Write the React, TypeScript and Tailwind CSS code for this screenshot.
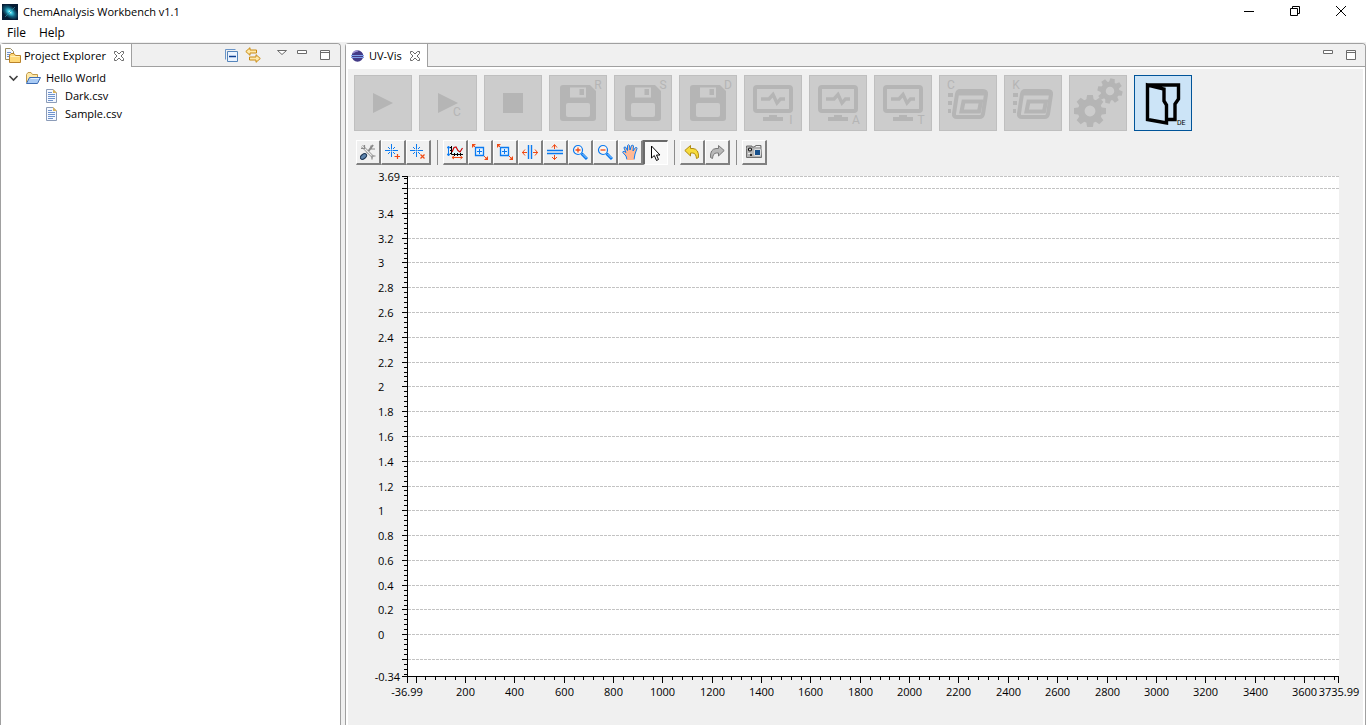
import React, { useEffect, useRef, useState } from "react";

type Kids = { children?: React.ReactNode };

/* ---------- small helpers ---------- */

function Icon({ children, className = "h-4 w-4" }: Kids & { className?: string }) {
  return (
    <svg viewBox="0 0 16 16" className={className} fill="none" aria-hidden="true">
      {children}
    </svg>
  );
}

function ToolButton({ label, pressed = false, children }: Kids & { label: string; pressed?: boolean }) {
  return (
    <button
      type="button"
      aria-label={label}
      aria-pressed={pressed}
      className={
        pressed
          ? "flex h-[25px] w-[25px] items-center justify-center border-t-2 border-l-2 border-r border-b border-t-[#696969] border-l-[#696969] border-r-white border-b-white bg-[#f8f8f8]"
          : "flex h-[25px] w-[25px] items-center justify-center border-t border-l border-r-2 border-b-2 border-t-white border-l-white border-r-[#808080] border-b-[#808080] bg-[#f0f0f0]"
      }
    >
      <Icon>{children}</Icon>
    </button>
  );
}

function Separator() {
  return <div className="mr-[5px] ml-1.5 h-[25px] w-px bg-[#8c8c8c]" />;
}

function ActionButton({ label, active = false, children }: Kids & { label: string; active?: boolean }) {
  return (
    <button
      type="button"
      aria-label={label}
      disabled={!active}
      className={
        active
          ? "h-14 w-[58px] border border-[#005499] bg-[#cce4f7]"
          : "h-14 w-[58px] border border-[#bfbfbf] bg-[#cccccc]"
      }
    >
      <svg viewBox="1 1 56 54" className="h-full w-full" fill="#b5b5b5" fontFamily="Roboto, sans-serif" aria-hidden="true">
        {children}
      </svg>
    </button>
  );
}

function Mark({ x, y, children }: Kids & { x: number; y: number }) {
  return (
    <text x={x} y={y} fontSize="12" textAnchor="middle">
      {children}
    </text>
  );
}

function Floppy() {
  return (
    <>
      <path d="M14 10H41L47 16V43Q47 46 44 46H14Q11 46 11 43V13Q11 10 14 10Z" />
      <path d="M21 12.500H37V22.500H21Z" fill="#ccc" />
      <path d="M30.500 14H35V20H30.500Z" />
      <rect x="17" y="28" width="24" height="14" rx="2" fill="#ccc" />
    </>
  );
}

function Monitor() {
  return (
    <>
      <rect x="11" y="12" width="36" height="24" rx="2" fill="none" stroke="#b5b5b5" strokeWidth="4" />
      <path d="M17 24H25L29 19.500L33 28L36.500 24H41" fill="none" stroke="#b5b5b5" strokeWidth="3.400" />
      <path d="M25 40H33V42H39V46H19V42H25Z" />
    </>
  );
}

function ListWindow() {
  return (
    <>
      <path d="M9 18H14V22H9ZM9 26H13V30H9ZM9 34H12V38H9Z" />
      <path d="M21 16H44Q47.500 16 47 19.500L44 39Q43.500 42 40.500 42H18Q14.500 42 15 38.500L18 19Q18.500 16 21 16Z" fill="none" stroke="#b5b5b5" strokeWidth="4" />
      <path d="M20 15H47L46 20.500H18.500Z" />
      <path d="M24.500 26.500H42L40 36.500H22.500Z" fill="none" stroke="#b5b5b5" strokeWidth="4" />
    </>
  );
}

function Gear({ cx, cy, r, start }: { cx: number; cy: number; r: number; start: number }) {
  const teeth = Array.from({ length: 8 }, (_, i) => start + i * 45);
  const body = r * 0.76;
  return (
    <>
      <circle cx={cx} cy={cy} r={(body + r * 0.34) / 2} fill="none" stroke="#b5b5b5" strokeWidth={body - r * 0.34} />
      {teeth.map((a) => (
        <path
          key={a}
          transform={`rotate(${a} ${cx} ${cy})`}
          d={`M${cx - r * 0.24} ${cy - r * 0.65}L${cx - r * 0.18} ${cy - r}H${cx + r * 0.18}L${cx + r * 0.24} ${cy - r * 0.65}Z`}
        />
      ))}
    </>
  );
}

/* ---------- view chrome ---------- */

function CloseGlyph() {
  return (
    <svg viewBox="0 0 12 12" className="h-3 w-3" fill="#fff" stroke="#6b6b6b" aria-hidden="true">
      <path d="M1.500 1.500H3.500L6 4L8.500 1.500H10.500V3.500L8 6L10.500 8.500V10.500H8.500L6 8L3.500 10.500H1.500V8.500L4 6L1.500 3.500Z" />
    </svg>
  );
}

function MinMax() {
  return (
    <div className="flex gap-[11px]">
      <button type="button" aria-label="Minimize view" className="h-3 w-3">
        <svg viewBox="0 0 12 12" fill="#fff" stroke="#6b6b6b" aria-hidden="true">
          <path d="M1.500 1.500H10.500V4.500H1.500Z" />
        </svg>
      </button>
      <button type="button" aria-label="Maximize view" className="h-3 w-3">
        <svg viewBox="0 0 12 12" fill="#fff" stroke="#6b6b6b" aria-hidden="true">
          <path d="M1.500 1.500H10.500V10.500H1.500ZM1.500 3.500H10.500" />
        </svg>
      </button>
    </div>
  );
}

function Tab({ title, icon }: { title: string; icon: React.ReactNode }) {
  return (
    <div className="flex h-full items-center border-r border-[#a0a0a0] bg-white pr-1.5 pl-1">
      {icon}
      <span className="pr-[7px] pl-[3px]">{title}</span>
      <button type="button" aria-label={`Close ${title}`}>
        <CloseGlyph />
      </button>
    </div>
  );
}

function FileIcon() {
  return (
    <Icon>
      <path d="M2.500 1.500H9L12.500 5V14.500H2.500Z" fill="#f4f8ff" stroke="#8c9cb8" />
      <path d="M9 1L13 5H9Z" fill="#d8b25c" />
      <path d="M4 4.500H8M4 6.500H11M4 8.500H11M4 10.500H11M4 12.500H9" stroke="#6f93cc" />
    </Icon>
  );
}

/* ---------- project explorer ---------- */

function ProjectExplorer() {
  return (
    <section className="flex w-[341px] shrink-0 flex-col rounded-t border border-b-0 border-[#a0a0a0] bg-white">
      <header className="flex h-[23px] shrink-0 rounded-t bg-[#f0f0f0]">
        <Tab
          title="Project Explorer"
          icon={
            <Icon>
              <path d="M.5 .5H5.500L8.500 3.500V11.500H.5Z" fill="#f4f8ff" stroke="#9a8c5c" />
              <path d="M2 4.500H6M2 6.500H6M2 8.500H5" stroke="#6f93cc" />
              <path d="M4.500 14.500V7L6 5.500H9L10.500 7.500H15.500V14.500Z" fill="#ffd978" stroke="#b9822a" />
              <path d="M5.500 8.500H14.500" stroke="#fff0b8" />
            </Icon>
          }
        />
        <div className="flex flex-1 items-center justify-end gap-2 border-b border-[#a0a0a0] pr-[9px]">
          <div className="flex items-center gap-1.5 pr-[7px]">
            <button type="button" aria-label="Collapse all">
              <Icon>
                <path d="M2.500 12.500V2.500H12.500" stroke="#6a95c8" />
                <path d="M4.500 4.500H14.500V14.500H4.500Z" fill="#eaf3ff" stroke="#5585bb" />
                <path d="M6 9.500H13" stroke="#0b3d91" strokeWidth="1.500" />
              </Icon>
            </button>
            <button type="button" aria-label="Link with editor">
              <Icon>
                <path d="M.8 4.500L5 .7V3H11.500V6H5V8.300Z" fill="#ffe9a8" stroke="#c98a12" />
                <path d="M15.300 11.500L11 7.700V10H4.500V13H11V15.300Z" fill="#ffe9a8" stroke="#c98a12" />
              </Icon>
            </button>
          </div>
          <button type="button" aria-label="View menu" className="h-3 w-3">
            <svg viewBox="0 0 12 12" fill="#fff" stroke="#6b6b6b" aria-hidden="true">
              <path d="M1.500 1.500H10.500L6 5.500Z" />
            </svg>
          </button>
          <MinMax />
        </div>
      </header>
      <ul className="flex flex-col pt-0.5">
        <li>
          <div className="flex h-[18px] items-center pl-1">
            <Icon>
              <path d="M4.500 6L8.500 10L12.500 6" stroke="#404040" strokeWidth="1.600" />
            </Icon>
            <span className="pl-1">
              <Icon>
                <path d="M1.500 12.500V4.500L3 2.500H6L7.500 4.500H12.500V7" fill="#ffe9a8" stroke="#c19a4b" />
                <path d="M1.500 13.500L4.500 7.500H15.500L12.500 13.500Z" fill="#a9cbf5" stroke="#3c6cb4" />
                <path d="M5.500 8.500H14" stroke="#e5f1ff" />
              </Icon>
            </span>
            <span className="pl-[5px]">Hello World</span>
          </div>
          <ul>
            {["Dark.csv", "Sample.csv"].map((name) => (
              <li key={name} className="flex h-[18px] items-center gap-[5px] pl-[43px]">
                <FileIcon />
                <span>{name}</span>
              </li>
            ))}
          </ul>
        </li>
      </ul>
    </section>
  );
}

/* ---------- chart ---------- */

const X_MIN = -36.99;
const X_MAX = 3735.99;
const Y_MIN = -0.337;
const Y_MAX = 3.698;
const PAD = { left: 59, right: 25, top: 7, bottom: 49 };

function range(from: number, to: number) {
  return Array.from({ length: to - from + 1 }, (_, i) => from + i);
}

function Chart() {
  const box = useRef<HTMLDivElement>(null);
  const [size, setSize] = useState({ w: 0, h: 0 });

  useEffect(() => {
    const el = box.current;
    if (!el) return;
    const measure = () => setSize({ w: el.clientWidth, h: el.clientHeight });
    measure();
    const observer = new ResizeObserver(measure);
    observer.observe(el);
    return () => observer.disconnect();
  }, []);

  const left = PAD.left;
  const right = size.w - PAD.right;
  const top = PAD.top;
  const bottom = size.h - PAD.bottom;
  const px = (v: number) => Math.floor(left + ((v - X_MIN) / (X_MAX - X_MIN)) * (right - left)) + 0.5;
  const py = (v: number) => Math.round(bottom - ((v - Y_MIN) / (Y_MAX - Y_MIN)) * (bottom - top)) + 0.5;
  const xTicks = range(0, 93).map((i) => i * 40);
  const yTicks = range(-8, 92).map((i) => i / 25);

  return (
    <div ref={box} className="min-h-0 flex-1 overflow-hidden">
      {size.w > 0 && (
        <svg width={size.w} height={size.h} role="img" aria-label="Spectrum chart" className="block">
          <rect x={left} y={top} width={right - left + 1} height={bottom - top} fill="#fff" />
          {[Y_MAX, ...range(-1, 18).map((i) => i / 5)].map((v) => (
            <path key={v} d={`M${left + 1} ${py(v)}H${right + 1}`} stroke="#c3c3c3" strokeDasharray="3 1" />
          ))}
          <path d={`M${left + 0.5} ${top}V${bottom + 0.5}H${right + 1}`} fill="none" stroke="#000" />
          {xTicks.map((v, i) => (
            <path key={v} d={`M${px(v)} ${bottom}v${i % 5 === 0 ? 7 : 4}`} stroke="#000" />
          ))}
          {yTicks.map((v, i) => (
            <path key={v} d={`M${left + 1} ${py(v)}h${(i - 8) % 5 === 0 ? -6 : -4}`} stroke="#000" />
          ))}
          <path
            d={`M${left + 0.5} ${bottom}v7M${right + 0.5} ${bottom}v7M${left} ${top + 0.5}h-5M${left} ${bottom + 0.5}h-5`}
            stroke="#000"
          />
          <g textAnchor="end">
            <text x={left - 7} y={top + 5}>3.69</text>
            <text x={left - 7} y={bottom + 5}>-0.34</text>
          </g>
          {range(0, 17).map((i) => (
            <text key={i} x={left - 29} y={py(i / 5) + 4}>
              {i / 5}
            </text>
          ))}
          <g textAnchor="middle">
            {range(1, 18).map((i) => (
              <text key={i} x={px(i * 200)} y={bottom + 20}>
                {i * 200}
              </text>
            ))}
            <text x={left} y={bottom + 20}>-36.99</text>
            <text x={right + 1} y={bottom + 20}>3735.99</text>
          </g>
        </svg>
      )}
    </div>
  );
}

/* ---------- UV-Vis view ---------- */

const RED = "#f04a14";
const BLUE = "#0a7af0";

function Crosshair() {
  return (
    <path d="M6.500 0V5M6.500 8V13M0 6.500H5M8 6.500H13M6 6H7V7H6ZM3 3L5 5M8 8L10 10M10 3L8 5M5 8L3 10" stroke={BLUE} />
  );
}

function ZoomBox() {
  return (
    <>
      <path d="M3.500 3.500H11.500V11.500H3.500Z" fill="#e6f2ff" stroke={BLUE} strokeWidth="1.300" />
      <path d="M5 7.500H10M7.500 5V10" stroke={BLUE} />
      <path d="M0 0H4L0 4ZM16 16V12L12 16Z" fill={RED} />
      <path d="M1 1L3 3M12 12L15 15" stroke={RED} />
    </>
  );
}

function Magnifier({ plus = false }: { plus?: boolean }) {
  return (
    <>
      <circle cx="6" cy="6" r="4.500" fill="#fff4ec" stroke={BLUE} strokeWidth="1.200" />
      <path d="M9.500 9.500L15 15" stroke={BLUE} strokeWidth="3" />
      <path d="M10.500 10L14.500 14" stroke="#9fd0ff" />
      <path d={plus ? "M3.500 6H8.500M6 3.500V8.500" : "M3.500 6H8.500"} stroke={RED} strokeWidth="1.300" />
    </>
  );
}

function ActionBar() {
  return (
    <div className="flex flex-wrap gap-[7px] px-1.5 pt-1.5">
      <ActionButton label="Run">
        <path d="M19 18L39 28L19 38Z" />
      </ActionButton>
      <ActionButton label="Run continuously">
        <path d="M19 18L39 28L19 38Z" />
        <Mark x={38} y={41}>C</Mark>
      </ActionButton>
      <ActionButton label="Stop">
        <path d="M19 18H39V38H19Z" />
      </ActionButton>
      {["R", "S", "D"].map((c) => (
        <ActionButton key={c} label={`Save ${c}`}>
          <Floppy />
          <Mark x={49} y={14}>{c}</Mark>
        </ActionButton>
      ))}
      {["I", "A", "T"].map((c) => (
        <ActionButton key={c} label={`Show ${c}`}>
          <Monitor />
          <Mark x={47} y={49}>{c}</Mark>
        </ActionButton>
      ))}
      {["C", "K"].map((c) => (
        <ActionButton key={c} label={`List ${c}`}>
          <ListWindow />
          <Mark x={12} y={14}>{c}</Mark>
        </ActionButton>
      ))}
      <ActionButton label="Settings">
        <Gear cx={21} cy={36} r={16} start={0} />
        <Gear cx={41} cy={16} r={12.5} start={12} />
      </ActionButton>
      <ActionButton label="Exit" active>
        <path
          d="M13.500 10L30 14V26L32.500 30V48L13.500 44.500ZM13.500 10H44.500V24L41 29V44.500H32.500"
          fill="none"
          stroke="#000"
          strokeWidth="3.400"
        />
        <text x="43" y="50" fontSize="7" fill="#000">DE</text>
      </ActionButton>
    </div>
  );
}

function ChartToolbar() {
  return (
    <div className="flex flex-wrap items-center pt-[9px] pl-2">
      <ToolButton label="Configure">
        <path d="M13 1L7 9" stroke="#8a8a8a" strokeWidth="2" />
        <path d="M2 2L13 13" stroke="#8a8a8a" strokeWidth="2.500" />
        <path d="M2 2L13 13" stroke="#eee" strokeWidth="1.200" />
        <path d="M1 4.500L4.500 4.500V1M12 15.500V12H15.500M11 1.500V5H15" stroke="#8a8a8a" strokeWidth="1.200" />
        <ellipse cx="3.500" cy="12.500" rx="3.500" ry="2.200" transform="rotate(-38 3.500 12.500)" fill="#5d84ad" stroke="#1d3553" />
      </ToolButton>
      <ToolButton label="Add annotation">
        <Crosshair />
        <path d="M9.500 12.500H15M12.500 10V15" stroke={RED} strokeWidth="1.200" />
      </ToolButton>
      <ToolButton label="Remove annotation">
        <Crosshair />
        <path d="M10.500 10.500L14.500 14.500M14.500 10.500L10.500 14.500" stroke={RED} strokeWidth="1.200" />
      </ToolButton>
      <Separator />
      <ToolButton label="Auto scale">
        <path d="M5 2H15V10H5Z" fill="#e0f7fa" />
        <path d="M1.500 3V11M0 4.500L1.500 2L3 4.500M0 9.500L1.500 12L3 9.500" stroke={BLUE} />
        <path d="M4.500 2V10.500H16M3 3.500H5M3 6.500H5M3 9.500H5M7.500 9V12M10.500 9V12M13.500 9V12" stroke="#000" />
        <path d="M5 8L7 3.500L9 3L11 6.500L13 8L15.500 4" stroke="#d00000" strokeWidth="1.200" />
        <path d="M5 13.500H15M7 12L5 13.500L7 15M13.500 12L15.500 13.500L13.500 15" stroke={RED} />
      </ToolButton>
      <ToolButton label="Rubberband zoom">
        <ZoomBox />
      </ToolButton>
      <ToolButton label="Dynamic zoom">
        <ZoomBox />
      </ToolButton>
      <ToolButton label="Horizontal zoom">
        <path d="M6.500 1V15M9.500 1V15" stroke={BLUE} strokeWidth="1.400" />
        <path d="M0 8.500H5M11 8.500H16M3 5.500L.5 8.500L3 11.500M13 5.500L15.500 8.500L13 11.500" stroke={RED} />
      </ToolButton>
      <ToolButton label="Vertical zoom">
        <path d="M0 6.500H16M0 9.500H16" stroke={BLUE} strokeWidth="1.400" />
        <path d="M7.500 1V5M7.500 11V16M5 3.500L7.500 .5L10 3.500M5 13L7.500 15.500L10 13" stroke={RED} />
      </ToolButton>
      <ToolButton label="Zoom in">
        <Magnifier plus />
      </ToolButton>
      <ToolButton label="Zoom out">
        <Magnifier />
      </ToolButton>
      <ToolButton label="Pan">
        <path
          d="M5 15.500L4 12L.8 8.500Q.5 7 2.500 7.500L4 8.500L2 4Q2 2.500 3.500 3L5.500 6.500L5.500 1.500Q6.500 0 7.500 1.500L8 6L9.500 1.500Q11 .5 11.500 2L11 7L13.500 3.500Q15 3 15 4.500L13 10L12 15.500Z"
          fill="#ffb894"
          stroke={BLUE}
        />
        <path d="M5 15.500H12" stroke="#ffb894" strokeWidth="1.500" />
      </ToolButton>
      <ToolButton label="Select" pressed>
        <path d="M3.500 1V13L6.300 10.500L8.500 15.500L10.500 14.500L8.500 10H12Z" fill="#fff" stroke="#000" />
      </ToolButton>
      <Separator />
      <ToolButton label="Undo">
        <path d="M.8 6.500L6.500 1.500V4.500H9Q15 5 14.500 13.500L12.500 14.500Q12 9 8.500 9H6.500V12Z" fill="#f7dc3c" stroke="#b08a10" />
      </ToolButton>
      <ToolButton label="Redo">
        <path d="M15.200 6.500L9.500 1.500V4.500H7Q1 5 1.500 13.500L3.500 14.500Q4 9 7.500 9H9.500V12Z" fill="#b8b8b8" stroke="#787878" />
      </ToolButton>
      <Separator />
      <ToolButton label="Save snapshot">
        <path d="M.5 4.500V2H6V3H8L10 1.500H15V4.500L15.500 13.500H.5Z" fill="#b4b4b4" stroke="#707070" />
        <circle cx="4" cy="5.500" r="1.500" fill="#fff" stroke="#111" strokeWidth="1.200" />
        <path d="M8.500 5.500H14.500V11.500H8.500Z" fill="#17508c" stroke="#ddd" />
        <path d="M10 2.500H14M2 9.500H4" stroke="#eee" />
        <path d="M4 10H6V12H4Z" fill="#333" />
      </ToolButton>
    </div>
  );
}

function UvVisView() {
  return (
    <section className="flex min-w-0 flex-1 flex-col rounded-t border border-b-0 border-[#a0a0a0] bg-white">
      <header className="flex h-[23px] shrink-0 rounded-t bg-[#f0f0f0]">
        <Tab
          title="UV-Vis"
          icon={
            <Icon>
              <circle cx="7.500" cy="8" r="5.800" fill="#433a86" />
              <path d="M3 5Q5 2.500 8 3" stroke="#9a8fd0" strokeWidth="1.500" />
              <path d="M1 7.500H14M1 9.500H14" stroke="#7d9fe8" />
            </Icon>
          }
        />
        <div className="flex flex-1 items-center justify-end border-b border-[#a0a0a0] pr-2">
          <MinMax />
        </div>
      </header>
      <div className="mx-0.5 mt-0.5 flex min-h-0 flex-1 flex-col bg-[#f0f0f0]">
        <ActionBar />
        <ChartToolbar />
        <div className="h-1 shrink-0" />
        <Chart />
      </div>
    </section>
  );
}

/* ---------- window ---------- */

export default function App() {
  return (
    <div className="flex h-screen min-h-96 flex-col bg-white font-['Open_Sans','Noto_Sans',sans-serif] text-[11px] leading-4 text-black">
      <header className="flex h-[23px] shrink-0 items-center pl-0.5">
        <svg viewBox="0 0 16 16" className="h-4 w-4" aria-hidden="true">
          <defs>
            <radialGradient id="glow">
              <stop offset="0" stopColor="#e0ffff" />
              <stop offset=".25" stopColor="#38c8e0" />
              <stop offset=".6" stopColor="#12607c" />
              <stop offset="1" stopColor="#061c34" />
            </radialGradient>
          </defs>
          <rect width="16" height="16" fill="#061c34" />
          <ellipse cx="8" cy="8" rx="10" ry="6" transform="rotate(40 8 8)" fill="url(#glow)" />
          <path d="M3 13L13 3" stroke="#2c93a8" strokeWidth=".7" />
        </svg>
        <h1 className="pl-[5px]">ChemAnalysis Workbench v1.1</h1>
        <div className="ml-auto flex items-center gap-[34px] pr-[19px]">
          <button type="button" aria-label="Minimize">
            <svg viewBox="0 0 12 12" className="h-3 w-3" stroke="#000" aria-hidden="true">
              <path d="M1 5.500H11" />
            </svg>
          </button>
          <button type="button" aria-label="Restore">
            <svg viewBox="0 0 12 12" className="h-3 w-3" fill="none" stroke="#000" aria-hidden="true">
              <path d="M1.500 2.500H8.500V9.500H1.500ZM3.500 2.500V.5H10.500V7.500H8.500" />
            </svg>
          </button>
          <button type="button" aria-label="Close">
            <svg viewBox="0 0 12 12" className="h-3 w-3" stroke="#000" aria-hidden="true">
              <path d="M1 0L11 10M11 0L1 10" />
            </svg>
          </button>
        </div>
      </header>
      <nav className="flex h-[19px] shrink-0 items-center gap-[13px] pl-[7px] text-xs">
        <button type="button">File</button>
        <button type="button">Help</button>
      </nav>
      <main className="flex min-h-0 flex-1 gap-1 bg-[#f0f0f0] pt-px">
        <ProjectExplorer />
        <UvVisView />
      </main>
    </div>
  );
}
